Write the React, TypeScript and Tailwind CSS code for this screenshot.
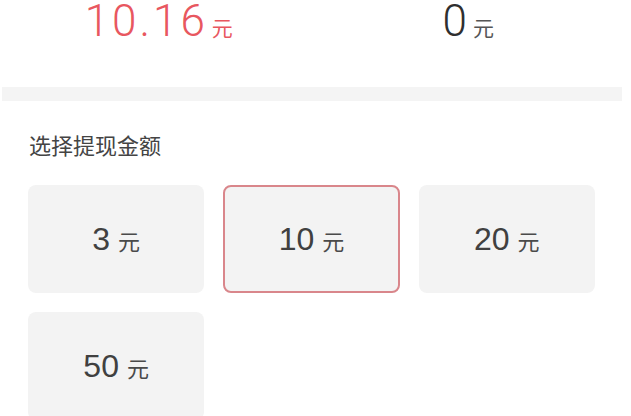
const amounts = [3, 10, 20, 50];

export default function App() {
  const selected = 10;

  return (
    <div className="w-[631px] h-[416px] overflow-hidden bg-white font-['Liberation_Sans','Noto_Sans_CJK_SC',sans-serif]">
      {/* balances */}
      <div className="flex">
        <div className="flex-1 flex justify-center items-baseline pl-[4px]">
          <span className="font-['Roboto','Noto_Sans_CJK_SC',sans-serif] font-light text-[44px] leading-[42px] tracking-[3px] text-[#e8575f]">
            10.16
          </span>
          <span className="ml-[4px] text-[21px] leading-none text-[#e8575f]">元</span>
        </div>
        <div className="flex-1 flex justify-center items-baseline pr-[8px]">
          <span className="font-['Roboto','Noto_Sans_CJK_SC',sans-serif] font-light text-[44px] leading-[42px] text-[#2f2f2f]">
            0
          </span>
          <span className="ml-[6px] text-[21px] leading-none text-[#555]">元</span>
        </div>
      </div>

      <div className="mt-[45px] ml-[2px] w-[620px] h-[14px] bg-[#f4f4f4]" />

      <div className="mt-[35px] pl-[29px] text-[22px] leading-[22px] text-[#444]">选择提现金额</div>

      <div className="mt-[27px] ml-[28px] w-[567px] grid grid-cols-3 gap-x-[19px] gap-y-[19px]">
        {amounts.map((a) => (
          <div
            key={a}
            className={
              a === selected
                ? 'h-[108px] rounded-[8px] bg-[#f3f3f3] border-2 border-[#d9868b] flex items-center justify-center'
                : 'h-[108px] rounded-[8px] bg-[#f3f3f3] flex items-center justify-center'
            }
          >
            <div className="flex items-baseline">
              <span className="text-[32px] leading-none text-[#404040]">{a}</span>
              <span className="ml-[8px] text-[22px] leading-none text-[#4a4a4a]">元</span>
            </div>
          </div>
        ))}
      </div>
    </div>
  );
}
